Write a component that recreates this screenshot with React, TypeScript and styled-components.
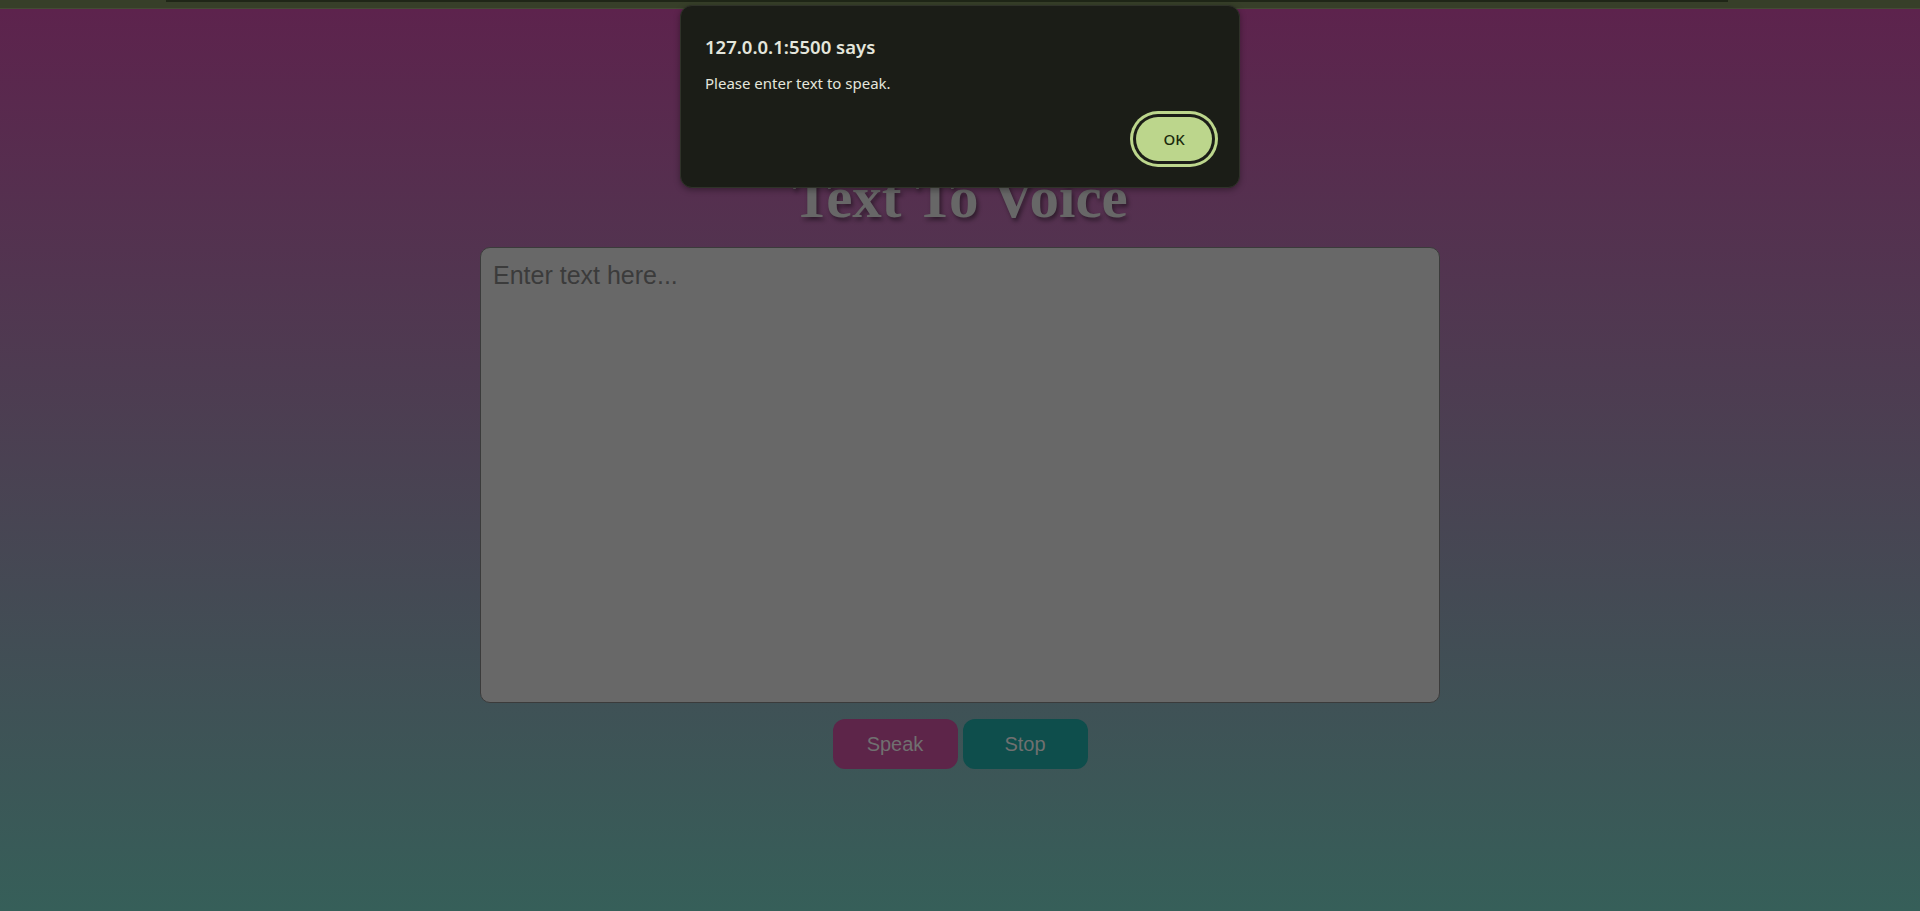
import React from "react";
import styled, { createGlobalStyle } from "styled-components";

const GlobalStyle = createGlobalStyle`
  html, body {
    margin: 0;
    padding: 0;
    height: 100%;
  }
  body {
    background: #365f59;
    overflow: hidden;
  }
  #root {
    height: 100%;
  }
`;

const Page = styled.div`
  position: relative;
  display: flex;
  flex-direction: column;
  height: 911px;
  width: 1920px;
`;

const TopBar = styled.div`
  height: 9px;
  flex: 0 0 9px;
  background: #373f29;
  display: flex;
  padding: 0 192px 0 166px;
  border-bottom: 1px solid #454b35;
  box-sizing: border-box;
`;

const TopLine = styled.div`
  flex: 1;
  height: 2px;
  background: #1f2617;
`;

const Main = styled.main`
  flex: 1;
  display: flex;
  flex-direction: column;
  align-items: center;
  padding-top: 157px;
  background: linear-gradient(to bottom, #5d234d 0%, #4a4152 50%, #365f59 100%);
`;

const Title = styled.h1`
  margin: 0 0 19px;
  font-family: "Liberation Serif", "Times New Roman", serif;
  font-size: 59px;
  font-weight: 700;
  line-height: 62px;
  color: #676767;
  text-shadow: 2px 3px 4px rgba(0, 0, 0, 0.45);
`;

const TextArea = styled.textarea`
  width: 960px;
  height: 456px;
  box-sizing: border-box;
  padding: 13px 12px 12px;
  border: 1px solid #3b3b3b;
  border-radius: 10px;
  background: #686868;
  font-family: "Liberation Sans", Arial, sans-serif;
  font-size: 25px;
  color: #2c2c2c;
  resize: none;
  outline: none;
  &::placeholder {
    color: #3b3b3b;
  }
`;

const ButtonRow = styled.div`
  display: flex;
  gap: 5px;
  margin-top: 16px;
`;

const ActionButton = styled.button<{ $bg: string }>`
  width: 125px;
  height: 50px;
  border: none;
  border-radius: 12px;
  background: ${(p) => p.$bg};
  color: #707070;
  font-family: "Liberation Sans", Arial, sans-serif;
  font-size: 20px;
  cursor: pointer;
`;

const Dialog = styled.div`
  position: absolute;
  left: 680px;
  top: 5px;
  width: 560px;
  height: 183px;
  box-sizing: border-box;
  padding: 30px 27px 26px 24px;
  background: #1b1d17;
  border: 1px solid #2f3229;
  border-radius: 12px;
  box-shadow: 0 2px 6px rgba(0, 0, 0, 0.35);
  display: flex;
  flex-direction: column;
  font-family: "Noto Sans", "Open Sans", sans-serif;
  color: #e4e6dc;
`;

const DialogTitle = styled.div`
  font-size: 18.5px;
  font-weight: 600;
  line-height: 22px;
`;

const DialogMessage = styled.div`
  margin-top: 15px;
  font-size: 15px;
  line-height: 20px;
`;

const DialogActions = styled.div`
  margin-top: auto;
  display: flex;
  justify-content: flex-end;
`;

const OkButton = styled.button`
  width: 76px;
  height: 44px;
  border: none;
  border-radius: 999px;
  background: #bcd68c;
  color: #1b2a0c;
  font-family: "Noto Sans", "Open Sans", sans-serif;
  font-size: 15px;
  font-weight: 500;
  box-shadow: 0 0 0 3px #1b1d17, 0 0 0 6px #bcd68c;
  cursor: pointer;
`;

export default function App() {
  return (
    <>
      <GlobalStyle />
      <Page>
        <TopBar>
          <TopLine />
        </TopBar>
        <Main>
          <Title>Text To Voice</Title>
          <TextArea placeholder="Enter text here..." />
          <ButtonRow>
            <ActionButton $bg="#5d2549">Speak</ActionButton>
            <ActionButton $bg="#0e4e4c">Stop</ActionButton>
          </ButtonRow>
        </Main>
        <Dialog role="alertdialog">
          <DialogTitle>127.0.0.1:5500 says</DialogTitle>
          <DialogMessage>Please enter text to speak.</DialogMessage>
          <DialogActions>
            <OkButton>OK</OkButton>
          </DialogActions>
        </Dialog>
      </Page>
    </>
  );
}
